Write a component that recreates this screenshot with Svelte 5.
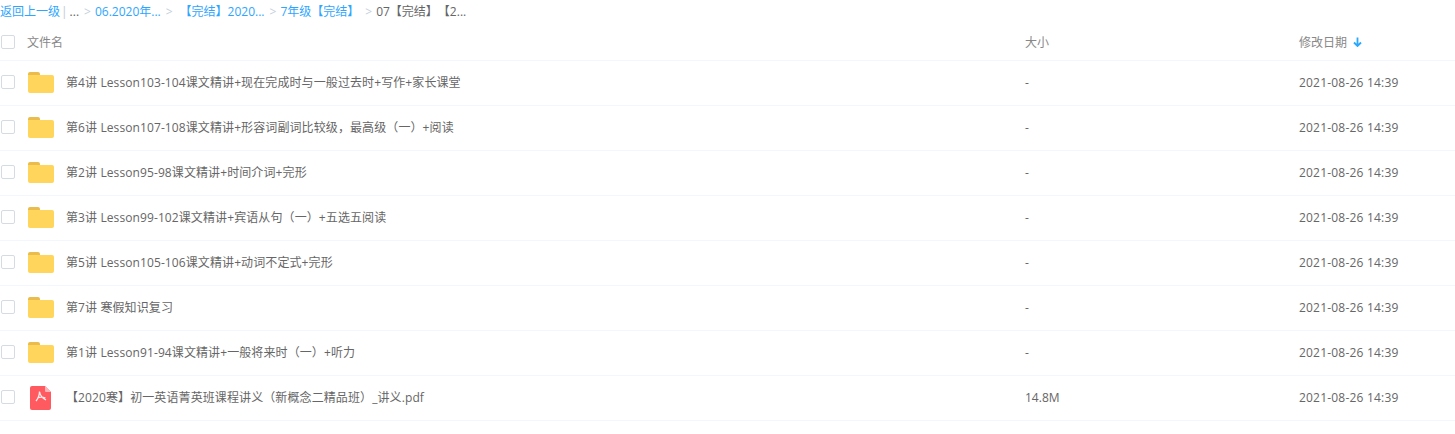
<script>
  const files = [
    { name: '第4讲 Lesson103-104课文精讲+现在完成时与一般过去时+写作+家长课堂', size: '-' },
    { name: '第6讲 Lesson107-108课文精讲+形容词副词比较级，最高级（一）+阅读', size: '-' },
    { name: '第2讲 Lesson95-98课文精讲+时间介词+完形', size: '-' },
    { name: '第3讲 Lesson99-102课文精讲+宾语从句（一）+五选五阅读', size: '-' },
    { name: '第5讲 Lesson105-106课文精讲+动词不定式+完形', size: '-' },
    { name: '第7讲 寒假知识复习', size: '-' },
    { name: '第1讲 Lesson91-94课文精讲+一般将来时（一）+听力', size: '-' },
    { name: '【2020寒】初一英语菁英班课程讲义（新概念二精品班）_讲义.pdf', size: '14.8M', pdf: true }
  ];
  const date = '2021-08-26 14:39';
</script>

<div class="page">
  <div class="crumbs">
    <a class="back">返回上一级</a>
    <span class="pipe">|</span>
    <span class="dots">...</span>
    <span class="sep">&gt;</span>
    <a>06.2020年...</a>
    <span class="sep">&gt;</span>
    <a class="c2">【完结】2020...</a>
    <span class="sep">&gt;</span>
    <a class="c3">7年级【完结】</a>
    <span class="sep">&gt;</span>
    <span class="current">07【完结】【2...</span>
  </div>

  <div class="row head">
    <span class="check"></span>
    <span class="name">文件名</span>
    <span class="size">大小</span>
    <span class="date">修改日期
      <svg class="arrow" viewBox="0 0 9 10" width="9" height="10">
        <path d="M4.500 0.500V8.500M1 5.500L4.500 9L8 5.500" fill="none" stroke="#29a8ff" stroke-width="1.800" />
      </svg>
    </span>
  </div>

  {#each files as f}
    <div class="row">
      <span class="check"></span>
      {#if f.pdf}
        <svg class="icon pdf-icon" viewBox="0 0 21 24" width="21" height="24">
          <path d="M2 0H15L21 6V22a2 2 0 0 1-2 2H2a2 2 0 0 1-2-2V2a2 2 0 0 1 2-2Z" fill="#ff5a5f" />
          <path d="M15 0L21 6H16a1 1 0 0 1-1-1Z" fill="#ffb5b7" />
          <path d="M9.500 5.500C9.500 8.500 8.500 12 6 15M9.500 5.500C10 9 12 12 16 14M8 11.500C10.500 11 13 11 15.500 12" fill="none" stroke="#ffecec" stroke-width="1.300" />
        </svg>
      {:else}
        <svg class="icon" viewBox="0 0 26 22" width="26" height="22">
          <path d="M0 3a2 2 0 0 1 2-2H10a2 2 0 0 1 2 2V5H0Z" fill="#eabc4e" />
          <path d="M0 4H24a2 2 0 0 1 2 2V20a2 2 0 0 1-2 2H2a2 2 0 0 1-2-2Z" fill="#ffd55c" />
        </svg>
      {/if}
      <span class="name" class:pdf={f.pdf}>{f.name}</span>
      <span class="size">{f.size}</span>
      <span class="date">{date}</span>
    </div>
  {/each}
</div>

<style>
  :global(body) {
    background: #fff;
  }

  .page {
    font-family: 'Open Sans', 'Noto Sans CJK SC', sans-serif;
    font-size: 12px;
    color: #666;
    overflow: hidden;
    height: 434px;
    text-spacing-trim: space-all;
  }

  .crumbs {
    display: flex;
    align-items: center;
    height: 22px;
    white-space: nowrap;
  }

  .crumbs a {
    color: #2ea6ff;
  }

  .pipe {
    color: #c4c8cf;
    margin: 0 2px 0 1px;
  }

  .sep {
    color: #c4d0dc;
    margin: 0 4px 0 5px;
  }

  .c2 {
    margin-left: 3px;
  }

  .c3 {
    margin-right: 1px;
  }

  .row {
    display: flex;
    align-items: center;
    height: 42px;
    padding-bottom: 2px;
    border-bottom: 1px solid #f2f6fd;
  }

  .head {
    height: 36px;
    padding-bottom: 0;
    padding-top: 2px;
    color: #888;
  }

  .check {
    flex: none;
    width: 12px;
    height: 12px;
    margin-left: 1px;
    border: 1px solid #d5dbe3;
    border-radius: 2px;
  }

  .icon {
    flex: none;
    margin-left: 13px;
  }

  .pdf-icon {
    margin: 2px 3px 0 15px;
  }

  .name {
    flex: none;
    width: 959px;
    margin-left: 12px;
    white-space: nowrap;
    letter-spacing: 0.1px;
  }

  .head .name {
    width: 998px;
    margin-left: 12px;
    letter-spacing: 0;
  }

  .size {
    flex: none;
    width: 274px;
  }

  .date {
    white-space: nowrap;
    letter-spacing: 0.2px;
  }

  .head .date {
    letter-spacing: 0;
  }

  .arrow {
    margin-left: 3px;
  }
</style>
